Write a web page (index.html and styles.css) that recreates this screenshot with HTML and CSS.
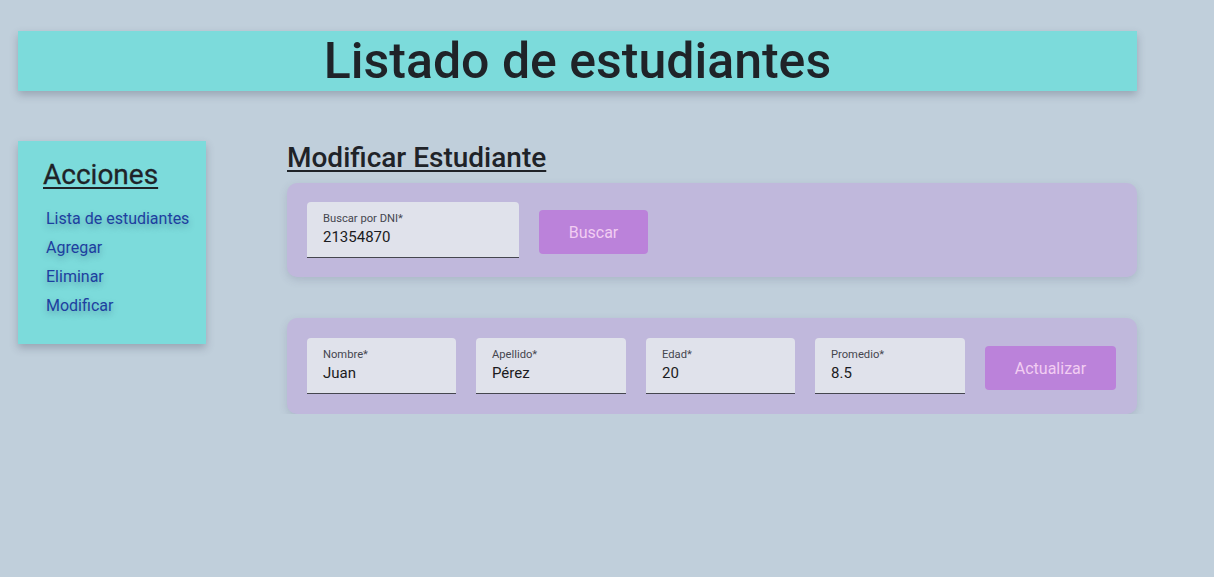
FILE: index.html
```html
<!DOCTYPE html>
<html lang="es">
<head>
<meta charset="utf-8">
<title>Listado de estudiantes</title>
<link rel="stylesheet" href="styles.css">
</head>
<body>
  <header class="top">
    <h1 class="title">Listado de estudiantes</h1>
  </header>
  <div class="layout">
    <nav class="side">
      <h2 class="side-title">Acciones</h2>
      <ul class="links">
        <li><a href="#">Lista de estudiantes</a></li>
        <li><a href="#">Agregar</a></li>
        <li><a href="#">Eliminar</a></li>
        <li><a href="#">Modificar</a></li>
      </ul>
    </nav>
    <main class="main">
      <h2 class="section-title">Modificar Estudiante</h2>
      <div class="card">
        <div class="field field-dni">
          <span class="label">Buscar por DNI*</span>
          <span class="value">21354870</span>
        </div>
        <button class="btn btn-buscar">Buscar</button>
      </div>
      <div class="card card-2">
        <div class="field field-a">
          <span class="label">Nombre*</span>
          <span class="value">Juan</span>
        </div>
        <div class="field field-b">
          <span class="label">Apellido*</span>
          <span class="value">Pérez</span>
        </div>
        <div class="field field-a">
          <span class="label">Edad*</span>
          <span class="value">20</span>
        </div>
        <div class="field field-b">
          <span class="label">Promedio*</span>
          <span class="value">8.5</span>
        </div>
        <button class="btn btn-act">Actualizar</button>
      </div>
    </main>
  </div>
</body>
</html>
```

FILE: styles.css
```css
html, body {
  margin: 0;
  background: #c0cfdb;
}
body {
  font-family: Roboto, "Liberation Sans", sans-serif;
  padding: 31px 77px 0 18px;
  color: #1f2328;
}
.top {
  height: 60px;
  background: #7cdbdb;
  box-shadow: 0 4px 8px rgba(60, 70, 90, 0.3);
  display: flex;
  align-items: center;
  justify-content: center;
}
.title {
  margin: 0;
  font-size: 50px;
  font-weight: 500;
  line-height: 60px;
  color: #1f2328;
}
.layout {
  display: flex;
  margin-top: 50px;
  align-items: flex-start;
}
.side {
  width: 188px;
  height: 203px;
  box-sizing: border-box;
  background: #7cdbdb;
  box-shadow: 0 4px 8px rgba(60, 70, 90, 0.3);
  padding: 17px 0 0 25px;
}
.side-title {
  margin: 0;
  font-size: 28px;
  font-weight: 400;
  line-height: 34px;
  text-decoration: underline;
  text-decoration-thickness: 2px;
  text-underline-offset: 3px;
  color: #1f2328;
  -webkit-text-stroke: 0.3px #1f2328;
}
.links {
  list-style: none;
  margin: 12px 0 0 3px;
  padding: 0;
}
.links li {
  height: 29px;
  line-height: 29px;
}
.links a {
  font-size: 16px;
  color: #1d3fa0;
  text-decoration: none;
  text-shadow: 0 3px 6px rgba(40, 60, 100, 0.35);
}
.main {
  flex: 1;
  margin-left: 81px;
}
.section-title {
  margin: 0;
  font-size: 28px;
  font-weight: 500;
  line-height: 34px;
  padding-top: 0;
  height: 38px;
  box-sizing: border-box;
  text-decoration: underline;
  text-decoration-thickness: 2px;
  text-underline-offset: 3px;
  color: #1f2328;
}
.card {
  margin-top: 4px;
  background: #c0b8dc;
  border-radius: 10px;
  box-shadow: 0 3px 8px rgba(70, 80, 110, 0.18);
  padding: 19px 20px 19px 20px;
  display: flex;
  align-items: center;
  gap: 20px;
}
.card-2 {
  margin-top: 41px;
  padding-top: 20px;
  padding-bottom: 20px;
}
.field {
  height: 56px;
  box-sizing: border-box;
  background: #e0e2eb;
  border-radius: 4px 4px 0 0;
  border-bottom: 1px solid #45464f;
  padding: 10px 16px 0 16px;
  display: flex;
  flex-direction: column;
}
.field-dni {
  width: 212px;
}
.field-a {
  width: 149px;
}
.field-b {
  width: 150px;
}
.label {
  font-size: 11.2px;
  line-height: 14px;
  color: #45464f;
}
.value {
  font-size: 15px;
  line-height: 22px;
  color: #1b1b21;
}
.btn {
  border: none;
  border-radius: 4px;
  background: #bb82da;
  color: #f2cdf2;
  font-family: Roboto, "Liberation Sans", sans-serif;
  font-size: 16px;
  height: 44px;
  padding: 0;
  margin-top: 4px;
}
.btn-buscar {
  width: 109px;
}
.btn-act {
  width: 131px;
}
```
